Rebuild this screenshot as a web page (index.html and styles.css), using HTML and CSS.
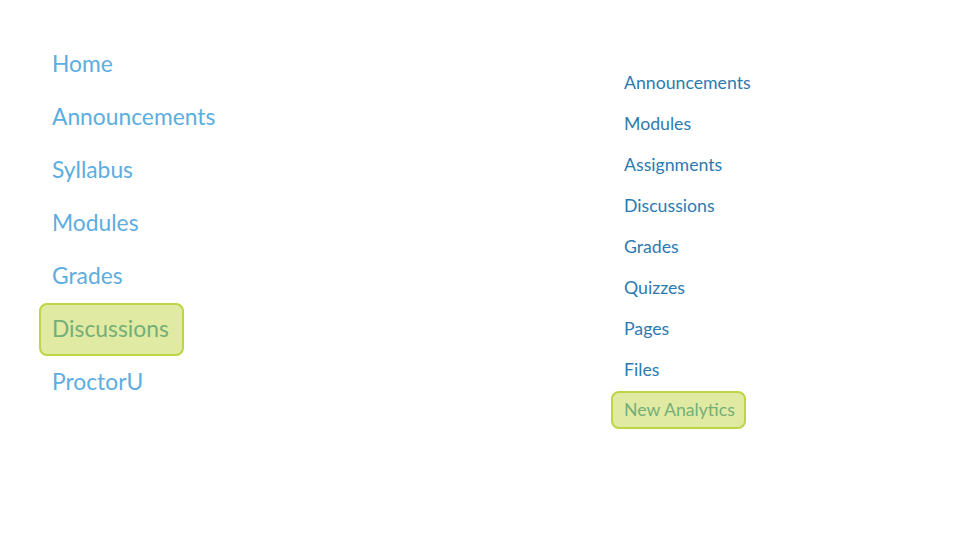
FILE: index.html
```html
<!DOCTYPE html>
<html>
<head>
<meta charset="utf-8">
<link rel="stylesheet" href="styles.css">
</head>
<body>
<div class="page">
  <ul class="nav nav-large">
    <li class="item">Home</li>
    <li class="item">Announcements</li>
    <li class="item">Syllabus</li>
    <li class="item">Modules</li>
    <li class="item">Grades</li>
    <li class="item item-hl">Discussions</li>
    <li class="item">ProctorU</li>
  </ul>
  <ul class="nav nav-small">
    <li class="item">Announcements</li>
    <li class="item">Modules</li>
    <li class="item">Assignments</li>
    <li class="item">Discussions</li>
    <li class="item">Grades</li>
    <li class="item">Quizzes</li>
    <li class="item">Pages</li>
    <li class="item">Files</li>
    <li class="item item-hl">New Analytics</li>
  </ul>
</div>
</body>
</html>
```
FILE: styles.css
```css
html, body {
  margin: 0;
  padding: 0;
  background: #ffffff;
}
body {
  width: 960px;
  height: 540px;
  overflow: hidden;
  font-family: Lato, "Open Sans", sans-serif;
}
.page {
  display: flex;
  align-items: flex-start;
}
.nav {
  list-style: none;
  margin: 0;
  display: flex;
  flex-direction: column;
  align-items: flex-start;
}
.item {
  border: 2px solid transparent;
  border-radius: 8px;
  box-sizing: border-box;
}
.nav-large {
  padding: 38px 0 0 39px;
  width: 611px;
  box-sizing: border-box;
  color: #5dade0;
  font-size: 22.8px;
}
.nav-large .item {
  height: 53px;
  line-height: 47px;
  padding: 0 13px 0 11px;
}
.nav-small {
  padding: 64px 0 0 0;
  color: #2c7ab2;
  font-size: 17.7px;
  gap: 3px;
}
.nav-small .item {
  height: 38px;
  line-height: 34px;
  padding: 0 9px 0 11px;
}
.nav-small .item-hl {
  margin-top: -1px;
}
.item-hl {
  background: #e0eaa3;
  border-color: #bcd544;
  color: #74af78;
}
```
